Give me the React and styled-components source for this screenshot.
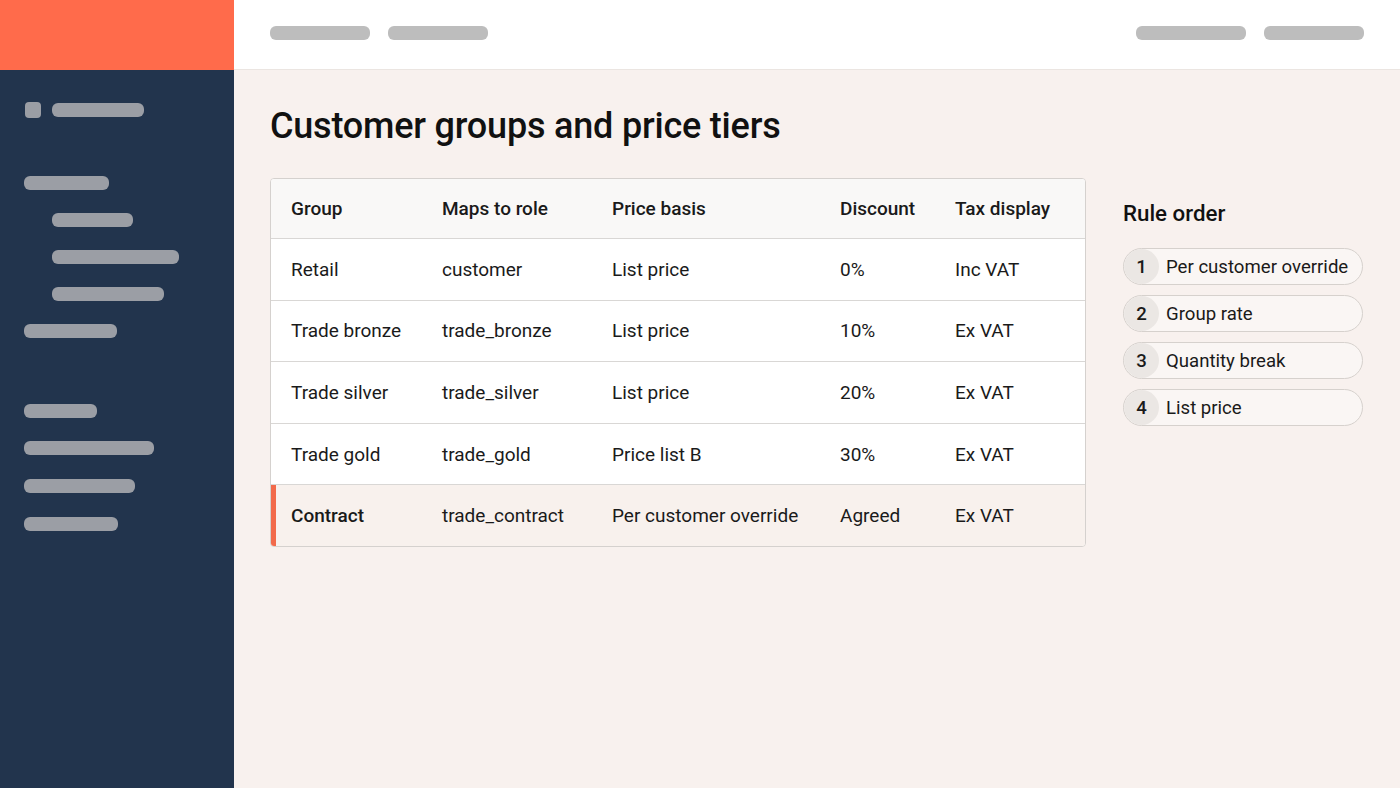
import React from "react";
import styled, { createGlobalStyle } from "styled-components";

const Global = createGlobalStyle`
  html, body { margin: 0; padding: 0; }
  body { font-family: Roboto, "Noto Sans", "Liberation Sans", sans-serif; background: #f8f1ee; color: #141414; }
  * { box-sizing: border-box; }
`;

const Shell = styled.div`
  display: grid;
  grid-template-columns: 234px 1fr;
  grid-template-rows: 70px 1fr;
  width: 1400px;
  height: 788px;
  overflow: hidden;
`;

const Brand = styled.div`
  background: #ff6b4b;
`;

const TopBar = styled.header`
  background: #ffffff;
  border-bottom: 1px solid #ebe5e1;
  display: flex;
  align-items: center;
  justify-content: space-between;
  padding: 0 36px;
`;

const Group = styled.div`
  display: flex;
  gap: ${(p) => p.$gap || 18}px;
  margin-bottom: 3px;
`;

const Skel = styled.div`
  width: ${(p) => p.$w}px;
  height: 14px;
  border-radius: 6px;
  background: ${(p) => (p.$dark ? "#9b9ea5" : "#bdbdbd")};
`;

const Side = styled.nav`
  background: #22344d;
  padding: 32px 0 0 24px;
  display: flex;
  flex-direction: column;
`;

const SideRow = styled.div`
  display: flex;
  align-items: center;
  gap: 11px;
  padding-left: ${(p) => (p.$indent ? 28 : 0)}px;
  margin-top: ${(p) => p.$mt ?? 23}px;
`;

const Square = styled.div`
  width: 16px;
  height: 16px;
  border-radius: 4px;
  background: #9b9ea5;
`;

const Main = styled.main`
  padding: 34px 37px 0 36px;
`;

const Title = styled.h1`
  margin: 0 0 30px 0;
  font-size: 36px;
  font-weight: 500;
  line-height: 44px;
  letter-spacing: -0.2px;
  color: #111;
`;

const Content = styled.div`
  display: flex;
  gap: 37px;
  align-items: flex-start;
`;

const Table = styled.div`
  width: 816px;
  border: 1px solid #d5d1ce;
  border-radius: 4px;
  overflow: hidden;
  background: #fff;
`;

const Row = styled.div`
  display: grid;
  grid-template-columns: 151px 170px 228px 115px 1fr;
  height: ${(p) => (p.$head ? "59px" : "61.6px")};
  align-items: center;
  border-top: ${(p) => (p.$first ? "none" : "1px solid #d9d7d5")};
  background: ${(p) => (p.$head ? "#f9f8f7" : p.$hl ? "#f8f1ed" : "#ffffff")};
  position: relative;
  font-size: 19px;
  font-weight: ${(p) => (p.$head ? 500 : 400)};
  color: #1a1a1a;
`;

const Accent = styled.div`
  position: absolute;
  left: 0;
  top: 0;
  bottom: 0;
  width: 5px;
  background: #f26a4b;
`;

const Cell = styled.div`
  padding-left: 20px;
  font-weight: ${(p) => (p.$bold ? 500 : "inherit")};
  white-space: nowrap;
`;

const Aside = styled.aside`
  width: 240px;
  padding-top: 21px;
`;

const AsideTitle = styled.h2`
  margin: 0 0 21px 0;
  font-size: 22.3px;
  font-weight: 500;
  line-height: 28px;
  color: #111;
`;

const Steps = styled.ol`
  list-style: none;
  margin: 0;
  padding: 0;
  display: flex;
  flex-direction: column;
  gap: 10px;
`;

const Step = styled.li`
  display: flex;
  align-items: center;
  height: 37px;
  border: 1px solid #d6d1cd;
  border-radius: 19px;
  background: #faf6f4;
  font-size: 18.6px;
  color: #1a1a1a;
  overflow: hidden;
`;

const Num = styled.span`
  width: 35px;
  height: 35px;
  border-radius: 50%;
  background: #ebe7e4;
  display: flex;
  align-items: center;
  justify-content: center;
  font-weight: 500;
  margin-right: 7px;
  flex-shrink: 0;
`;

const columns = ["Group", "Maps to role", "Price basis", "Discount", "Tax display"];
const rows = [
  ["Retail", "customer", "List price", "0%", "Inc VAT"],
  ["Trade bronze", "trade_bronze", "List price", "10%", "Ex VAT"],
  ["Trade silver", "trade_silver", "List price", "20%", "Ex VAT"],
  ["Trade gold", "trade_gold", "Price list B", "30%", "Ex VAT"],
  ["Contract", "trade_contract", "Per customer override", "Agreed", "Ex VAT", true],
];
const steps = ["Per customer override", "Group rate", "Quantity break", "List price"];

export default function App() {
  return (
    <>
      <Global />
      <Shell>
        <Brand />
        <TopBar>
          <Group>
            <Skel $w={100} />
            <Skel $w={100} />
          </Group>
          <Group>
            <Skel $w={110} />
            <Skel $w={100} />
          </Group>
        </TopBar>
        <Side>
          <SideRow $mt={0} style={{ paddingLeft: 1 }}>
            <Square />
            <Skel $dark $w={92} />
          </SideRow>
          <SideRow $mt={58}><Skel $dark $w={85} /></SideRow>
          <SideRow $indent><Skel $dark $w={81} /></SideRow>
          <SideRow $indent><Skel $dark $w={127} /></SideRow>
          <SideRow $indent><Skel $dark $w={112} /></SideRow>
          <SideRow><Skel $dark $w={93} /></SideRow>
          <SideRow $mt={66}><Skel $dark $w={73} /></SideRow>
          <SideRow><Skel $dark $w={130} /></SideRow>
          <SideRow $mt={24}><Skel $dark $w={111} /></SideRow>
          <SideRow $mt={24}><Skel $dark $w={94} /></SideRow>
        </Side>
        <Main>
          <Title>Customer groups and price tiers</Title>
          <Content>
            <Table>
              <Row $head $first>
                {columns.map((c) => (
                  <Cell key={c}>{c}</Cell>
                ))}
              </Row>
              {rows.map((r) => (
                <Row key={r[0]} $hl={r[5]}>
                  {r[5] && <Accent />}
                  {r.slice(0, 5).map((c, i) => (
                    <Cell key={i} $bold={r[5] && i === 0}>{c}</Cell>
                  ))}
                </Row>
              ))}
            </Table>
            <Aside>
              <AsideTitle>Rule order</AsideTitle>
              <Steps>
                {steps.map((s, i) => (
                  <Step key={s}>
                    <Num>{i + 1}</Num>
                    {s}
                  </Step>
                ))}
              </Steps>
            </Aside>
          </Content>
        </Main>
      </Shell>
    </>
  );
}
